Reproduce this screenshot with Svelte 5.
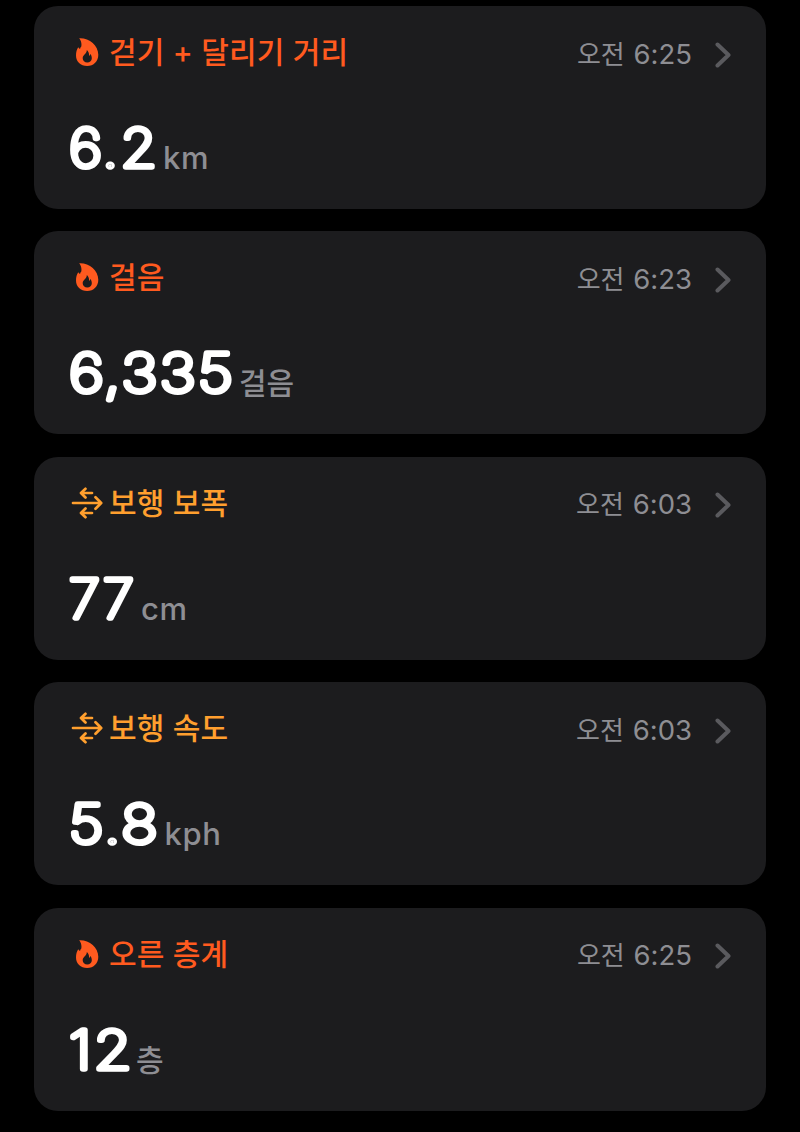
<script lang="ts">
type Icon = "flame" | "arrows";

interface Metric {
    icon: Icon;
    title: string;
    time: string;
    value: string;
    unit: string;
    unitX: number;
    width: number;
    latin?: boolean;
}

const metrics: Metric[] = [
    { icon: "flame", title: "걷기 + 달리기 거리", time: "6:25", value: "6.2", unit: "km", unitX: 93, width: 90, latin: true },
    { icon: "flame", title: "걸음", time: "6:23", value: "6,335", unit: "걸음", unitX: 169, width: 166 },
    { icon: "arrows", title: "보행 보폭", time: "6:03", value: "77", unit: "cm", unitX: 71, width: 67, latin: true },
    { icon: "arrows", title: "보행 속도", time: "6:03", value: "5.8", unit: "kph", unitX: 94.5, width: 91, latin: true },
    { icon: "flame", title: "오른 층계", time: "6:25", value: "12", unit: "층", unitX: 66, width: 65 },
];
</script>

<main class="list">
    {#each metrics as metric}
        <article class="card">
            <header class="header">
                <span class={["icon", metric.icon]}>
                    {#if metric.icon === "flame"}
                        <svg width="24" height="28" viewBox="0 0 24 28">
                            <path
                                fill="currentColor"
                                fill-rule="evenodd"
                                d="M4.200 .2C14 -.3 23.300 7 23.300 16.800C23.300 23.500 18.700 28 12.200 28C5.500 28 1 23.800 1 17.500C1 14 1.900 11.200 3.200 9.200C3.700 9.900 4.300 10.500 5 10.900C5.200 10 5.700 9.200 6.300 8.500C6.800 5.300 6.100 2.700 4.200 .2ZM11.800 12C12 15.800 7.700 16.800 7.700 20.300C7.700 22.900 9.700 24.500 12.200 24.500C14.900 24.500 16.800 22.900 16.800 20.300C16.800 18.500 16.200 17.100 15.300 16.100C15.100 17.100 14.700 17.800 14 18.100C14.300 15.700 13.500 13.200 11.800 12Z"
                            />
                        </svg>
                    {:else}
                        <svg width="32" height="32" viewBox="0 0 32 32">
                            <path
                                fill="none"
                                stroke="currentColor"
                                stroke-width="2.700"
                                stroke-linecap="round"
                                stroke-linejoin="round"
                                d="M2 16H30M24.500 10.300L30.200 16L24.500 21.700M21 6H10.500M14.500 1.800L10 6L14.500 10.500M21 26H10.500M14.500 21.500L10 26L14.500 30.200"
                            />
                        </svg>
                    {/if}
                </span>
                <h2 class={["title", metric.icon]}>{metric.title}</h2>
                <time class="time"><span class="meridiem">오전</span> {metric.time}</time>
                <svg class="chevron" width="16" height="26" viewBox="0 0 16 26">
                    <path d="M2.500 2.500L13.500 13L2.500 23.500" />
                </svg>
            </header>
            <svg class="reading" width="320" height="64">
                <text
                    class="value"
                    x="-1"
                    y="46.400"
                    textLength={metric.width}
                    lengthAdjust="spacingAndGlyphs">{metric.value}</text>
                <text class={["unit", metric.latin && "latin"]} x={metric.unitX} y="48">{metric.unit}</text>
            </svg>
        </article>
    {/each}
</main>

<style>
:global(body) {
    margin: 0;
    background: #000;
}

.list {
    box-sizing: border-box;
    height: 1132px;
    padding: 6px 34px 0;
    display: flex;
    flex-direction: column;
    gap: 22.4px;
    overflow: hidden;
    font-family: Inter, "Noto Sans CJK KR", sans-serif;
}

.card {
    box-sizing: border-box;
    height: 203px;
    flex: none;
    padding: 26px 35px 0 36px;
    border-radius: 24px;
    background: #1c1c1e;
}

.header {
    display: flex;
    align-items: center;
    height: 40px;
}

.icon {
    display: flex;
    justify-content: center;
    width: 34px;
    margin-right: 5px;
}

.flame {
    color: #ff5a1f;
}

.arrows {
    color: #ff9f2e;
}

.title {
    flex: 1;
    margin: 0;
    font-size: 30px;
    font-weight: 500;
    line-height: 40px;
    letter-spacing: 0.2px;
    white-space: nowrap;
}

.time {
    margin-top: 4px;
    color: #8e8e93;
    font-size: 27.5px;
    line-height: 40px;
    white-space: nowrap;
}

.meridiem {
    margin-right: 1px;
    font-size: 26px;
}

.chevron {
    margin: 5px 0 0 23px;
    fill: none;
    stroke: #5a5a5e;
    stroke-width: 4;
    stroke-linecap: round;
    stroke-linejoin: round;
}

.reading {
    display: block;
    margin-top: 49px;
    overflow: visible;
}

.value {
    fill: #fff;
    stroke: #fff;
    stroke-width: 5.6;
    stroke-linejoin: round;
    font-size: 53px;
    font-weight: 100;
    letter-spacing: 2px;
}

.unit {
    fill: #8e8e93;
    font-size: 30px;
    font-weight: 500;
}

.latin {
    font-size: 31px;
    font-weight: 550;
    letter-spacing: 0.6px;
}
</style>
